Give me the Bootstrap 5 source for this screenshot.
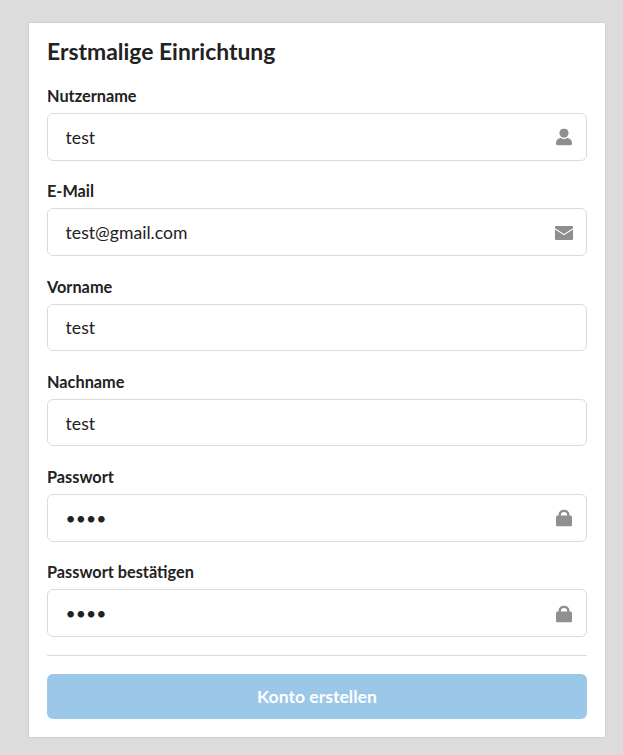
<!DOCTYPE html>
<html lang="de">
<head>
    <meta charset="UTF-8">
    <meta name="viewport" content="width=device-width, initial-scale=1.0">
    <title>Erstmalige Einrichtung</title>
    <link href="https://cdn.jsdelivr.net/npm/bootstrap@5.3.0/dist/css/bootstrap.min.css" rel="stylesheet">
    <style>
        body { background: #dcdcdc; font-family: Lato, "Liberation Sans", sans-serif; color: #222; min-height: 755px; }
        .setup-wrap { padding: 23px 18px 18px 29px; }
        .setup-box { background: #fff; padding: 18px; border-radius: 0; box-shadow: 0 0 2px rgba(0,0,0,.15); }
        .setup-title { font-size: 22.9px; font-weight: 700; line-height: 20px; margin-bottom: 23px; color: #222; }
        .setup-field { margin-bottom: 18.8px; }
        .setup-field label { display: block; font-size: 16.3px; font-weight: 700; line-height: 24px; margin-bottom: 5px; color: #222; }
        .setup-input { height: 47.5px; font-size: 17.6px; padding: 1px 48px 0 17.6px; border: 1px solid #dbdbdb; border-radius: 6px; color: #222; font-family: Lato, "Liberation Sans", sans-serif; }
        .setup-icon { position: absolute; top: calc(50% + .5px); right: 15px; transform: translateY(-50%); display: block; fill: #8f8f8f; }
        .setup-rule { border: 0; border-top: 1px solid #dbdbdb; opacity: 1; margin: 18px 0; }
        .setup-submit { height: 45px; padding-top: 8px; font-size: 17.6px; font-weight: 700; background: #9bc7e9 !important; border: 0; border-radius: 6px; opacity: 1 !important; color: #fff !important; font-family: Lato, "Liberation Sans", sans-serif; }
    </style>
</head>
<body>
    <div class="setup-wrap">
        <div class="setup-box">
            <h1 class="setup-title">Erstmalige Einrichtung</h1>
            <form>
                <div class="setup-field">
                    <label for="nutzername">Nutzername</label>
                    <div class="position-relative">
                        <input type="text" class="form-control setup-input" id="nutzername" value="test">
                        <svg class="setup-icon" width="16" height="17" viewBox="0 0 16 17"><circle cx="8" cy="4.600" r="4.600"/><path d="M0 14.500C0 11 3 9.500 5 9.500c1 .6 2 .9 3 .9s2-.3 3-.9c2 0 5 1.500 5 5V15c0 1.200-.8 2-2 2H2c-1.200 0-2-.8-2-2z"/></svg>
                    </div>
                </div>
                <div class="setup-field">
                    <label for="email">E-Mail</label>
                    <div class="position-relative">
                        <input type="email" class="form-control setup-input" id="email" value="test@gmail.com">
                        <svg class="setup-icon" style="right:14px" width="18" height="14" viewBox="0 0 18 14"><path d="M1 0h16c.6 0 1 .4 1 1v1.300L9 8 0 2.300V1c0-.6.4-1 1-1z"/><path d="M0 3.500l9 5.700 9-5.700V13c0 .6-.4 1-1 1H1c-.6 0-1-.4-1-1z"/></svg>
                    </div>
                </div>
                <div class="setup-field">
                    <label for="vorname">Vorname</label>
                    <input type="text" class="form-control setup-input" id="vorname" value="test">
                </div>
                <div class="setup-field">
                    <label for="nachname">Nachname</label>
                    <input type="text" class="form-control setup-input" id="nachname" value="test">
                </div>
                <div class="setup-field">
                    <label for="passwort">Passwort</label>
                    <div class="position-relative">
                        <input type="password" class="form-control setup-input" id="passwort" value="test">
                        <svg class="setup-icon" width="16" height="17" viewBox="0 0 16 17"><path d="M2.500 7V5.500a5.500 5.500 0 0 1 11 0V7h-2.400V5.500a3.100 3.100 0 0 0-6.200 0V7z"/><rect y="6" width="16" height="11" rx="1.500"/></svg>
                    </div>
                </div>
                <div class="setup-field mb-0">
                    <label for="passwort2">Passwort bestätigen</label>
                    <div class="position-relative">
                        <input type="password" class="form-control setup-input" id="passwort2" value="test">
                        <svg class="setup-icon" width="16" height="17" viewBox="0 0 16 17"><path d="M2.500 7V5.500a5.500 5.500 0 0 1 11 0V7h-2.400V5.500a3.100 3.100 0 0 0-6.200 0V7z"/><rect y="6" width="16" height="11" rx="1.500"/></svg>
                    </div>
                </div>
                <hr class="setup-rule">
                <button type="submit" class="btn btn-primary w-100 setup-submit" disabled>Konto erstellen</button>
            </form>
        </div>
    </div>
    <script src="https://cdn.jsdelivr.net/npm/bootstrap@5.3.0/dist/js/bootstrap.bundle.min.js"></script>
</body>
</html>
